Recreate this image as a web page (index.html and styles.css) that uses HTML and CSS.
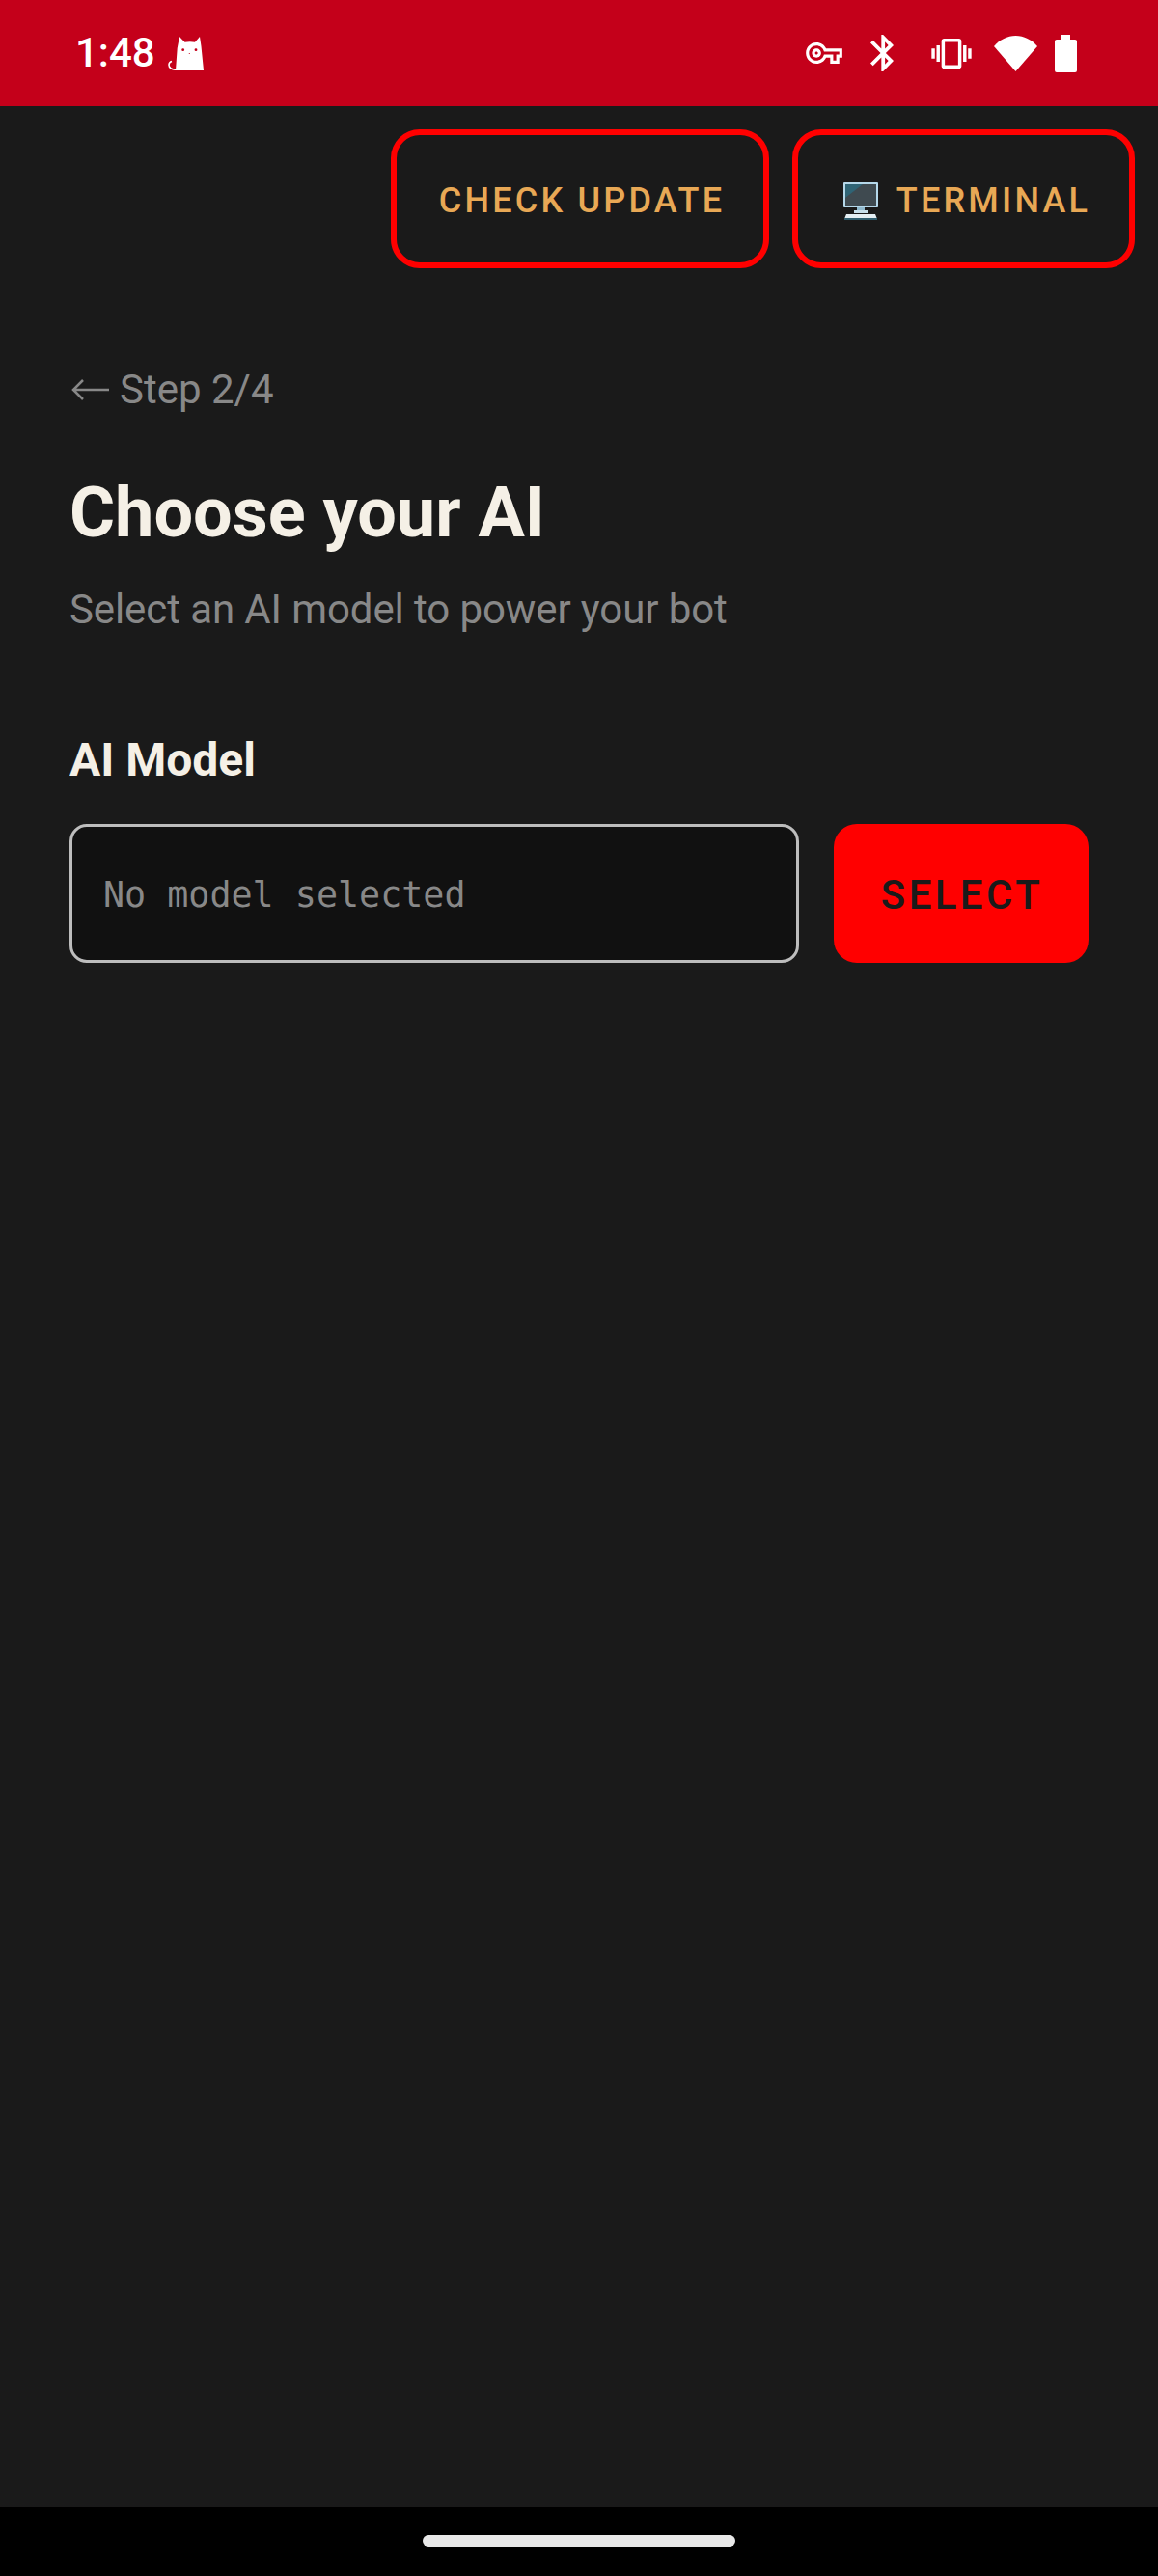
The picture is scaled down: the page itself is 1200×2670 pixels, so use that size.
FILE: index.html
```html
<!DOCTYPE html>
<html>
<head>
    <meta charset="utf-8">
    <title>Choose your AI</title>
    <link rel="stylesheet" href="styles.css">
</head>
<body>
<div class="status">
    <span class="time">1:48</span>
    <svg class="cat" viewBox="0 0 37 35">
        <path fill="#fff" d="M12 0L17.5 5.8C20.5 5 25 5 28 5.8L33 0L34.5 10L37 35H8L9.7 12z"/>
        <path fill="none" stroke="#fff" stroke-width="1.6" d="M10 34.3C4 34.5 .8 32 1 29C1.1 27.2 2.5 26 4 25.6"/>
        <circle class="cat-eye" cx="15.7" cy="13.7" r="1.4"/>
        <circle class="cat-eye" cx="29" cy="13.7" r="1.4"/>
        <circle class="cat-eye" cx="22.3" cy="17.5" r=".6"/>
    </svg>
    <div class="status-icons">
        <svg class="ic-key" viewBox="0 5 24 14"><path d="M22 19h-6v-4h-2.68c-1.14 2.42-3.6 4-6.32 4-3.86 0-7-3.14-7-7s3.14-7 7-7c2.72 0 5.17 1.58 6.32 4H24v6h-2v4zm-4-2h2v-4h2v-2H11.94l-.23-.67C11.01 8.34 9.11 7 7 7c-2.76 0-5 2.24-5 5s2.24 5 5 5c2.11 0 4.01-1.34 4.71-3.33l.23-.67H18v4zM7 15c-1.65 0-3-1.35-3-3s1.35-3 3-3 3 1.35 3 3-1.35 3-3 3zm0-4c-.55 0-1 .45-1 1s.45 1 1 1 1-.45 1-1-.45-1-1-1z"/></svg>
        <svg class="ic-bt" viewBox="5 2 12.71 20"><path d="M17.71 7.71L12 2h-1v7.59L6.41 5 5 6.41 10.59 12 5 17.59 6.41 19 11 14.41V22h1l5.71-5.71-4.3-4.29 4.3-4.29zM13 5.83l1.88 1.88L13 9.59V5.83zm1.88 10.46L13 18.17v-3.76l1.88 1.88z"/></svg>
        <svg class="ic-vib" viewBox="0 3 24 18"><path d="M0 15h2V9H0v6zm3 2h2V7H3v10zm19-8v6h2V9h-2zm-3 8h2V7h-2v10zM16.5 3h-9C6.67 3 6 3.67 6 4.5v15c0 .83.67 1.5 1.5 1.5h9c.83 0 1.5-.67 1.5-1.5v-15c0-.83-.67-1.5-1.5-1.5zM16 19H8V5h8v14z"/></svg>
        <svg class="ic-wifi" viewBox="0 0 45 37"><path d="M0 11C6 4 14 0 22.5 0S39 4 45 11L22.5 37z"/></svg>
        <svg class="ic-batt" viewBox="0 0 23 39"><path d="M7 0h9v5h5a2 2 0 0 1 2 2v30a2 2 0 0 1-2 2H2a2 2 0 0 1-2-2V7a2 2 0 0 1 2-2h5z"/></svg>
    </div>
</div>

<div class="page">
    <div class="top-actions">
        <div class="outline-btn check">CHECK UPDATE</div>
        <div class="outline-btn terminal">
            <svg class="pc" viewBox="0 0 36 39">
                <rect x="0" y="0" width="36" height="26" rx="1" fill="#b5d8ea"/>
                <rect x="2" y="2" width="32" height="22" fill="#3f4a50"/>
                <path d="M2 2h18L2 16z" fill="#2f6475"/>
                <rect x="14" y="26" width="8" height="4" fill="#8fb9cd"/>
                <rect x="11" y="29" width="14" height="3" fill="#c7dfeb"/>
                <path d="M3 33h30l2 5H1z" fill="#e4eef3"/>
                <rect x="1" y="37" width="34" height="2" fill="#2f5d6e"/>
            </svg>
            <span>TERMINAL</span>
        </div>
    </div>

    <div class="content">
        <div class="back">
            <svg class="arrow" viewBox="0 0 40 22"><path d="M39 11H2M12 1L2 11l10 10"/></svg>
            <span>Step 2/4</span>
        </div>
        <h1>Choose your AI</h1>
        <p class="sub">Select an AI model to power your bot</p>
        <div class="label">AI Model</div>
        <div class="model-row">
            <div class="model-input">No model selected</div>
            <div class="select-btn">SELECT</div>
        </div>
    </div>
</div>

<div class="navbar"><div class="pill"></div></div>
</body>
</html>
```

FILE: styles.css
```css
html, body {
    height: 100%;
}
body {
    margin: 0;
    background: #1a1a1a;
    font-family: "Roboto", sans-serif;
    display: flex;
    flex-direction: column;
}
.status {
    height: 110px;
    flex: none;
    background: #c4001a;
    color: #fff;
    display: flex;
    align-items: center;
    padding: 0 84px 0 78px;
    box-sizing: border-box;
}
.time {
    font-size: 42px;
    font-weight: 500;
    line-height: 110px;
}
.cat {
    width: 37px;
    height: 35px;
    margin-left: 13px;
}
.cat-eye {
    fill: #c4001a;
}
.status-icons {
    margin-left: auto;
    display: flex;
    align-items: center;
    fill: #fff;
}
.ic-key { width: 38px; height: 22px; }
.ic-bt { width: 24px; height: 38px; margin-left: 29px; }
.ic-vib { width: 42px; height: 31px; margin-left: 39px; }
.ic-wifi { width: 45px; height: 37px; margin-left: 23px; }
.ic-batt { width: 23px; height: 39px; margin-left: 18px; }

.page {
    flex: 1;
}
.top-actions {
    display: flex;
    justify-content: flex-end;
    gap: 24px;
    padding: 24px 24px 0 0;
}
.outline-btn {
    height: 144px;
    box-sizing: border-box;
    border: 6px solid #f00;
    border-radius: 30px;
    padding: 4px 0 0 4px;
    color: #e8a855;
    font-size: 36px;
    font-weight: 500;
    letter-spacing: 3.2px;
    display: flex;
    align-items: center;
    justify-content: center;
    gap: 19px;
}
.check { width: 392px; }
.terminal { width: 355px; padding-left: 7px; }
.pc {
    width: 36px;
    height: 39px;
}
.content {
    padding: 0 72px;
}
.back {
    margin-top: 98px;
    color: #888;
    font-size: 42px;
    line-height: 56px;
    display: flex;
    align-items: center;
    gap: 10px;
}
.arrow {
    width: 40px;
    height: 22px;
    margin-left: 2px;
    fill: none;
    stroke: #888;
    stroke-width: 2.5;
}
h1 {
    margin: 55px 0 0;
    color: #f5f0e6;
    font-size: 72px;
    font-weight: 700;
    line-height: 90px;
}
.sub {
    margin: 27px 0 0;
    color: #888;
    font-size: 42px;
    letter-spacing: -0.1px;
    line-height: 56px;
}
.label {
    margin-top: 100px;
    color: #f5f0e6;
    font-size: 48px;
    font-weight: 700;
    line-height: 56px;
}
.model-row {
    display: flex;
    gap: 36px;
    margin-top: 38px;
}
.model-input {
    flex: 1;
    height: 144px;
    box-sizing: border-box;
    border: 3px solid #bdbdbd;
    border-radius: 18px;
    background: #111;
    color: #888;
    font-family: "DejaVu Sans Mono", monospace;
    font-size: 36.7px;
    display: flex;
    align-items: center;
    padding: 2px 0 0 32px;
}
.select-btn {
    width: 264px;
    height: 144px;
    box-sizing: border-box;
    padding: 2px 0 0 2px;
    border-radius: 24px;
    background: #f00;
    color: #1a1a1a;
    font-size: 42px;
    font-weight: 500;
    letter-spacing: 3.4px;
    display: flex;
    align-items: center;
    justify-content: center;
}
.navbar {
    height: 72px;
    flex: none;
    background: #000;
    display: flex;
    justify-content: center;
    padding-top: 30px;
    box-sizing: border-box;
}
.pill {
    width: 324px;
    height: 12px;
    border-radius: 6px;
    background: #e8e8e8;
}
```
